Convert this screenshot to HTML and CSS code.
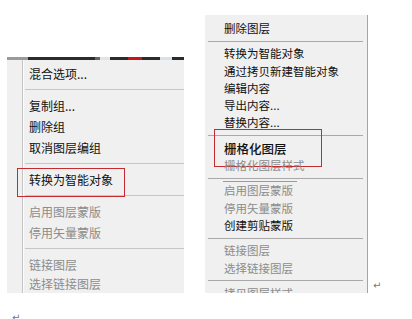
FILE: index.html
```html
<!DOCTYPE html>
<html lang="zh-CN">
<head>
    <meta charset="UTF-8">
    <title>图层菜单</title>
    <link rel="stylesheet" href="styles.css">
</head>
<body>
    <div class="row">
        <div class="menu-left">
            <div class="strip"></div>
            <div class="items">
                <div class="item">混合选项...</div>
                <div class="sep"></div>
                <div class="item">复制组...</div>
                <div class="item">删除组</div>
                <div class="item">取消图层编组</div>
                <div class="sep"></div>
                <div class="item marked">转换为智能对象<span class="mark mark-left"></span></div>
                <div class="sep"></div>
                <div class="item off">启用图层蒙版</div>
                <div class="item off">停用矢量蒙版</div>
                <div class="sep"></div>
                <div class="item off">链接图层</div>
                <div class="item off short">选择链接图层</div>
            </div>
        </div>

        <div class="menu-right">
            <div class="item">删除图层</div>
            <div class="sep"></div>
            <div class="item">转换为智能对象</div>
            <div class="item">通过拷贝新建智能对象</div>
            <div class="item">编辑内容</div>
            <div class="item">导出内容...</div>
            <div class="item">替换内容...</div>
            <div class="sep"></div>
            <div class="item big marked">栅格化图层<span class="mark mark-right"></span></div>
            <div class="item off">栅格化图层样式</div>
            <div class="sep tight"></div>
            <div class="hint"></div>
            <div class="item off">启用图层蒙版</div>
            <div class="item off">停用矢量蒙版</div>
            <div class="item">创建剪贴蒙版</div>
            <div class="sep"></div>
            <div class="item off">链接图层</div>
            <div class="item off">选择链接图层</div>
            <div class="sep"></div>
            <div class="item off">拷贝图层样式</div>
        </div>

        <span class="para">↵</span>
    </div>
    <div class="para-line"><span class="para">↵</span></div>
</body>
</html>
```

FILE: styles.css
```css
* {
    margin: 0;
    padding: 0;
    box-sizing: border-box;
}

body {
    width: 412px;
    height: 319px;
    overflow: hidden;
    background-color: #fff;
    font-family: "Noto Sans CJK SC", "Noto Sans", sans-serif;
    color: #111;
}

.row {
    display: flex;
    align-items: flex-end;
    margin-top: 15px;
    padding-left: 7px;
}

.menu-left {
    width: 177px;
    height: 236px;
    overflow: hidden;
    background-color: #f0f0f0;
}

.strip {
    height: 3px;
    background: linear-gradient(to right,
        #9a9a9a 0, #9a9a9a 21px,
        #2b2b2b 21px, #2b2b2b 88px,
        #666 88px, #666 93px,
        #e2e4e6 93px, #e2e4e6 103px,
        #2b2b2b 103px, #2b2b2b 121px,
        #c3161c 121px, #c3161c 135px,
        #2b2b2b 135px, #2b2b2b 153px,
        #d9e1e8 153px, #d9e1e8 165px,
        #2b2b2b 165px);
}

.menu-left .items {
    height: 233px;
    margin-left: 15px;
    padding-top: 3px;
    border-left: 1px solid #c4c4c4;
    box-shadow: inset 1px 0 0 #fbfbfb;
}

.menu-left .item {
    position: relative;
    height: 21px;
    line-height: 21px;
    padding-left: 6px;
    font-size: 12px;
    white-space: nowrap;
}

.menu-left .item.short {
    height: 18px;
    line-height: 18px;
}

.menu-left .sep {
    height: 1px;
    margin: 5px 0 5px 2px;
    background-color: #c6c6c6;
}

.menu-right {
    width: 163px;
    height: 278px;
    margin-left: 21px;
    overflow: hidden;
    padding-top: 5px;
    background-color: #f0f0f0;
    border-right: 1px solid #a4a4a4;
}

.menu-right .item {
    position: relative;
    height: 17.3px;
    line-height: 17.3px;
    padding-left: 19px;
    font-size: 11.5px;
    white-space: nowrap;
}

.menu-right .item.big {
    font-size: 12.5px;
    font-weight: 500;
}

.menu-right .sep {
    height: 1px;
    margin: 3.5px 4px 3.5px 3px;
    background-color: #a9a9a9;
}

.menu-right .sep.tight {
    margin-bottom: 2.5px;
}

.hint {
    width: 74px;
    height: 1px;
    margin: 0 0 0 18px;
    background-color: #6ea3d8;
}

.item.off {
    color: #8c8c8c;
}

.mark {
    position: absolute;
    border: 1px solid #c42a2f;
}

.mark-left {
    left: -6px;
    top: -1px;
    width: 108px;
    height: 29px;
}

.mark-right {
    left: 9px;
    top: -11px;
    width: 108px;
    height: 38px;
}

.para {
    font-family: "DejaVu Sans", sans-serif;
    font-size: 10px;
    line-height: 12px;
    color: #777;
}

.row > .para {
    margin-left: 5px;
    margin-bottom: 1px;
}

.para-line {
    padding: 9px 0 0 12px;
}
```
